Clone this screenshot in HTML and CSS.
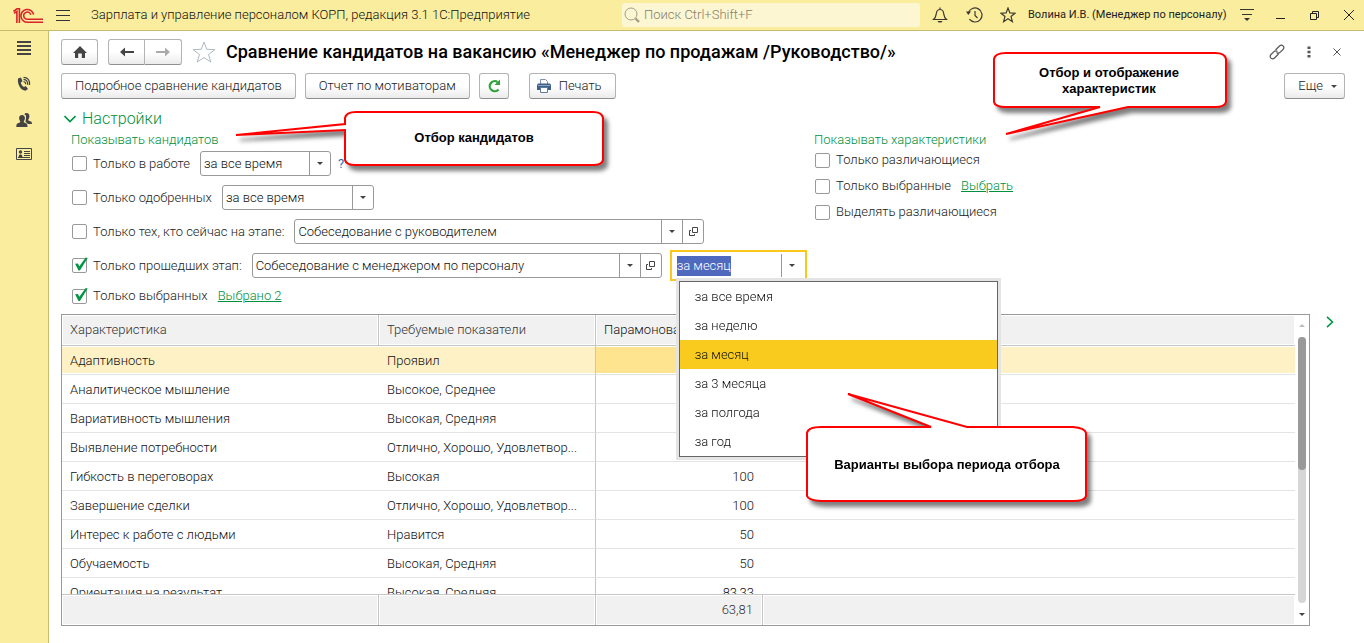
FILE: index.html
```html
<!DOCTYPE html>
<html lang="ru">
  <head>
    <meta charset="UTF-8" />
    <meta name="viewport" content="width=device-width, initial-scale=1.0" />
    <title>Сравнение кандидатов на вакансию</title>
    <link rel="stylesheet" href="styles.css">
  </head>
  <body>
    <header class="topbar">
      <svg class="logo" width="30" height="18" viewBox="0 0 30 18" fill="none" stroke="#d8232a" stroke-width="1.6">
        <path d="M0.5 5.5 L4 2.8 H6.4 V17" />
        <path d="M1 7.4 L3.9 5.4 V17" />
        <path d="M20.6 8.6 A6.4 6.4 0 1 0 15 16.2 H30" />
        <path d="M17.8 8.8 A3.6 3.6 0 1 0 15 13.2 H30" />
      </svg>
      <button class="icon-btn burger" aria-label="Меню">
        <svg width="14" height="12" viewBox="0 0 14 12" stroke="#333"><path d="M0 1.5H14M0 6.5H14M0 11.5H14" /></svg>
      </button>
      <span class="app-name">Зарплата и управление персоналом КОРП, редакция 3.1 1С:Предприятие</span>
      <label class="search">
        <svg width="16" height="16" viewBox="0 0 16 16" fill="none" stroke="#a39e86"><circle cx="7" cy="7" r="6" /><path d="M11.5 11.5L15 15" stroke-width="2.4" /></svg>
        <input type="search" placeholder="Поиск Ctrl+Shift+F" aria-label="Поиск" />
      </label>
      <button class="icon-btn bell" aria-label="Уведомления">
        <svg width="16" height="16" viewBox="0 0 16 16" fill="none" stroke="#3c3a30" stroke-width="1.2"><path d="M8 0.5V2.5M1.5 12.5C4 10.5 4 8.500 4.300 6.500C4.600 4 6 2.500 8 2.500S11.400 4 11.700 6.500C12 8.500 12 10.500 14.500 12.500Z" /><path d="M5.500 14H10.500L9.500 15.500H6.500Z" fill="#3c3a30" stroke="none" /></svg>
      </button>
      <button class="icon-btn history" aria-label="История">
        <svg width="17" height="16" viewBox="0 0 17 16" fill="none" stroke="#3c3a30" stroke-width="1.2"><path d="M2.300 6A7 7 0 1 1 3.400 12.200" /><path d="M9 4V8.500L11.500 11" /><path d="M0 4.500H5L2.300 8Z" fill="#3c3a30" stroke="none" /></svg>
      </button>
      <button class="icon-btn favorites" aria-label="Избранное">
        <svg width="16" height="16" viewBox="0 0 16 16" fill="none" stroke="#3c3a30" stroke-width="1.2"><path d="M8 1L9.900 5.900L15 6.200L11 9.500L12.400 14.700L8 11.800L3.600 14.700L5 9.500L1 6.200L6.100 5.900Z" /></svg>
      </button>
      <span class="user">Волина И.В. (Менеджер по персоналу)</span>
      <button class="icon-btn service" aria-label="Сервис">
        <svg width="14" height="14" viewBox="0 0 14 14" stroke="#333"><path d="M0 1.500H14M2 6.500H12" /><path d="M4 10H10L7 13Z" fill="#333" stroke="none" /></svg>
      </button>
      <div class="window-btns">
        <button class="icon-btn" aria-label="Свернуть"><svg width="10" height="10" viewBox="0 0 10 10" stroke="#222"><path d="M0 8.500H9" /></svg></button>
        <button class="icon-btn" aria-label="Развернуть"><svg width="10" height="10" viewBox="0 0 10 10" fill="none" stroke="#222"><path d="M0.500 3.500H6.500V9.500H0.500ZM2.500 3V1.500H8.500V7.500H7" /></svg></button>
        <button class="icon-btn" aria-label="Закрыть"><svg width="10" height="10" viewBox="0 0 10 10" stroke="#222"><path d="M0 0L10 10M10 0L0 10" /></svg></button>
      </div>
    </header>

    <div class="workspace">
      <nav class="sidebar">
        <button class="icon-btn" aria-label="Разделы">
          <svg width="16" height="16" viewBox="0 0 16 16" stroke="#444" stroke-width="2"><path d="M1 2H15M1 6H15M1 10H15M1 14H15" /></svg>
        </button>
        <button class="icon-btn" aria-label="Звонки">
          <svg width="16" height="16" viewBox="0 0 16 16" fill="none" stroke="#444"><path d="M2 2.500L5 1.500L6.500 5.200L4.800 6.500C5.300 8.500 6.300 10 8 11L9.800 10L12 13L9.500 14.800C4.500 14 1.200 8.500 2 2.500Z" fill="#444" stroke="none" /><path d="M7.500 5.500C9 5.800 9.700 6.800 9.700 8.300M7.500 3.300C10.200 3.500 11.800 5.500 11.700 8.700M7.500 1.300C11.800 1.300 14 4.500 13.500 9" stroke-width="1.200" /></svg>
        </button>
        <button class="icon-btn" aria-label="Сотрудники">
          <svg width="16" height="16" viewBox="0 0 16 16" fill="#444"><path d="M10.500 1C12.500 1 13.500 2.300 13.400 4.200C13.300 5.800 12.800 6.800 12.300 7.400V8.500L15 9.600C15.700 10 16 10.800 16 12H12L9.500 9.800L10 6V3.500L8.300 2.200C8.800 1.400 9.500 1 10.500 1Z" /><path d="M6 3C8 3 9 4.300 8.900 6.200C8.800 7.600 8.300 8.600 7.800 9.200V10.300L10.500 11.500C11.200 12 11.500 13 11.500 15H0.300C0.300 13 0.600 12 1.300 11.500L4.200 10.300V9.200C3.600 8.600 3.200 7.600 3.100 6.200C3 4.300 4 3 6 3Z" /></svg>
        </button>
        <button class="icon-btn" aria-label="Анкеты">
          <svg width="16" height="12" viewBox="0 0 16 12" fill="none" stroke="#444"><path d="M0.500 0.500H15.500V11.500H0.500Z" /><path d="M2.500 9.500C2.500 7 3.500 6.500 4.500 6.500S6.500 7 6.500 9.500Z" fill="#444" stroke="none" /><circle cx="4.500" cy="4" r="1.700" fill="#444" stroke="none" /><path d="M8 3.500H14M8 5.500H14M8 7.500H14M2 9.500H14" /></svg>
        </button>
      </nav>

      <main class="page">
        <div class="title-row">
          <button class="btn btn-nav" aria-label="Начальная страница">
            <svg width="16" height="14" viewBox="0 0 16 14" fill="#444"><path d="M8 1L15 8H13V13H9.800V8.500H6.200V13H3V8H1Z" /></svg>
          </button>
          <div class="nav-pair">
            <button class="btn" aria-label="Назад"><svg width="16" height="12" viewBox="0 0 16 12"><path d="M1 6L6 1.500V5H15V7H6V10.500Z" fill="#444" /></svg></button>
            <button class="btn" aria-label="Вперед"><svg width="16" height="12" viewBox="0 0 16 12"><path d="M15 6L10 1.500V5H1V7H10V10.500Z" fill="#aaa" /></svg></button>
          </div>
          <button class="icon-btn star" aria-label="В избранное">
            <svg width="24" height="22" viewBox="0 0 24 22" fill="none" stroke="#b0bac4"><path d="M12 1L14.700 8.300L23 8.600L16.500 13.500L18.800 21L12 16.600L5.200 21L7.500 13.500L1 8.600L9.300 8.300Z" /></svg>
          </button>
          <h1>Сравнение кандидатов на вакансию «Менеджер по продажам /Руководство/»</h1>
          <div class="form-tools">
            <button class="icon-btn" aria-label="Ссылка"><svg width="16" height="16" viewBox="0 0 16 16" fill="none" stroke="#555" stroke-width="1.200"><path d="M6.500 6L10.500 2C13 -0.300 16.300 3 14 5.500L11.300 8.200C10 9.500 8.500 9.300 7.500 8.500M9.500 10L5.500 14C3 16.300 -0.300 13 2 10.500L4.700 7.800C6 6.500 7.500 6.700 8.500 7.500" /></svg></button>
            <button class="icon-btn" aria-label="Действия"><svg width="4" height="12" viewBox="0 0 4 12" fill="#555"><path d="M0.500 0.500H3.500V3H0.500ZM0.500 4.800H3.500V7.300H0.500ZM0.500 9H3.500V11.500H0.500Z" /></svg></button>
            <button class="icon-btn" aria-label="Закрыть форму"><svg width="8" height="8" viewBox="0 0 8 8" stroke="#555"><path d="M0.500 0.500L7.500 7.500M7.500 0.500L0.500 7.500" /></svg></button>
          </div>
        </div>

        <div class="commands">
          <button class="btn">Подробное сравнение кандидатов</button>
          <button class="btn">Отчет по мотиваторам</button>
          <button class="btn btn-refresh" aria-label="Обновить">
            <svg width="14" height="14" viewBox="0 0 14 14"><path d="M11.500 10.500A5 5 0 1 1 10.500 3" fill="none" stroke="#2fa33a" stroke-width="2.200" /><path d="M13 0.500V6H7.500Z" fill="#2fa33a" /></svg>
          </button>
          <button class="btn btn-print">
            <svg width="14" height="14" viewBox="0 0 14 14"><path d="M3.500 5V0.500H8.500L10.500 2.500V5" fill="#fff" stroke="#7c93ad" /><path d="M1 4.500H13L14 6V11H0V6Z" fill="#3f6187" /><path d="M3.500 8.500H10.500V13.500H3.500Z" fill="#fff" stroke="#5f7c9c" /><path d="M1 6.500H13" stroke="#8fa8c2" /></svg>
            Печать
          </button>
          <button class="btn btn-more">Еще <i class="caret"></i></button>
        </div>

        <section class="settings">
          <h2>
            <svg width="12" height="8" viewBox="0 0 12 8" fill="none" stroke="#009646" stroke-width="1.600"><path d="M0.500 1L6 6.500L11.500 1" /></svg>
            Настройки
          </h2>
          <div class="settings-cols">
            <div class="filters">
              <h3>Показывать кандидатов</h3>
              <div class="row">
                <label class="check"><input type="checkbox" /> Только в работе</label>
                <span class="combo combo-small">
                  <select aria-label="Период в работе"><option>за все время</option></select>
                  <span class="drop"><i class="caret"></i></span>
                </span>
                <a class="help" href="#">?</a>
              </div>
              <div class="row">
                <label class="check"><input type="checkbox" /> Только одобренных</label>
                <span class="combo combo-medium">
                  <select aria-label="Период одобрения"><option>за все время</option></select>
                  <span class="drop"><i class="caret"></i></span>
                </span>
              </div>
              <div class="row">
                <label class="check"><input type="checkbox" /> Только тех, кто сейчас на этапе:</label>
                <span class="combo combo-large">
                  <select aria-label="Текущий этап"><option>Собеседование с руководителем</option></select>
                  <span class="drop"><i class="caret"></i></span>
                  <button class="open" aria-label="Открыть"><svg width="9" height="9" viewBox="0 0 9 9" fill="none" stroke="#444"><path d="M3.500 0.500H8.500V5.500H3.500ZM2 3.500H0.500V8.500H5.500V7" /></svg></button>
                </span>
              </div>
              <div class="row">
                <label class="check"><input type="checkbox" checked /> Только прошедших этап:</label>
                <span class="combo combo-large">
                  <select aria-label="Пройденный этап"><option>Собеседование с менеджером по персоналу</option></select>
                  <span class="drop"><i class="caret"></i></span>
                  <button class="open" aria-label="Открыть"><svg width="9" height="9" viewBox="0 0 9 9" fill="none" stroke="#444"><path d="M3.500 0.500H8.500V5.500H3.500ZM2 3.500H0.500V8.500H5.500V7" /></svg></button>
                </span>
                <div class="period">
                  <div class="combo combo-active">
                    <input id="period" type="text" value="за месяц" aria-label="Период" />
                    <span class="drop"><i class="caret"></i></span>
                  </div>
                  <ul class="options" role="listbox">
                    <li role="option">за все время</li>
                    <li role="option">за неделю</li>
                    <li role="option" class="current" aria-selected="true">за месяц</li>
                    <li role="option">за 3 месяца</li>
                    <li role="option">за полгода</li>
                    <li role="option">за год</li>
                  </ul>
                </div>
              </div>
              <div class="row row-last">
                <label class="check"><input type="checkbox" checked /> Только выбранных</label>
                <a href="#">Выбрано 2</a>
              </div>
            </div>

            <div class="features">
              <h3>Показывать характеристики</h3>
              <div class="row"><label class="check"><input type="checkbox" /> Только различающиеся</label></div>
              <div class="row"><label class="check"><input type="checkbox" /> Только выбранные</label> <a href="#">Выбрать</a></div>
              <div class="row"><label class="check"><input type="checkbox" /> Выделять различающиеся</label></div>
            </div>
          </div>
        </section>

        <div class="result">
          <div class="grid">
            <div class="grid-view">
              <table>
                <colgroup>
                  <col class="col-name" /><col class="col-need" /><col class="col-person" /><col />
                </colgroup>
                <thead>
                  <tr><th>Характеристика</th><th>Требуемые показатели</th><th class="person">Парамонова</th><th></th></tr>
                </thead>
                <tbody>
                  <tr class="selected"><td>Адаптивность</td><td>Проявил</td><td class="num active"></td><td></td></tr>
                  <tr><td>Аналитическое мышление</td><td>Высокое, Среднее</td><td class="num"></td><td></td></tr>
                  <tr><td>Вариативность мышления</td><td>Высокая, Средняя</td><td class="num"></td><td></td></tr>
                  <tr><td>Выявление потребности</td><td>Отлично, Хорошо, Удовлетвор...</td><td class="num"></td><td></td></tr>
                  <tr><td>Гибкость в переговорах</td><td>Высокая</td><td class="num">100</td><td></td></tr>
                  <tr><td>Завершение сделки</td><td>Отлично, Хорошо, Удовлетвор...</td><td class="num">100</td><td></td></tr>
                  <tr><td>Интерес к работе с людьми</td><td>Нравится</td><td class="num">50</td><td></td></tr>
                  <tr><td>Обучаемость</td><td>Высокая, Средняя</td><td class="num">50</td><td></td></tr>
                  <tr><td>Ориентация на результат</td><td>Высокая, Средняя</td><td class="num">83,33</td><td></td></tr>
                </tbody>
                <tfoot>
                  <tr><td></td><td></td><td class="num">63,81</td><td></td></tr>
                </tfoot>
              </table>
            </div>
            <div class="scroller">
              <i class="caret caret-up"></i>
              <div class="track"><div class="thumb"></div></div>
              <i class="caret"></i>
            </div>
          </div>
          <button class="icon-btn expand" aria-label="Показать панель">
            <svg width="8" height="12" viewBox="0 0 8 12" fill="none" stroke="#009646" stroke-width="1.600"><path d="M1 0.800L6.500 6L1 11.200" /></svg>
          </button>
        </div>
      </main>
    </div>

    <!-- callouts -->
    <div class="callout callout-candidates">
      <svg width="376" height="70" viewBox="0 0 376 70"><path d="M113 10Q114 4 124 4H361Q370 4 371 10V52Q370 57 361 57H124Q114 57 113 52V22L4 27L113 16Z" /></svg>
      <p>Отбор кандидатов</p>
    </div>
    <div class="callout callout-features">
      <svg width="246" height="96" viewBox="0 0 246 96"><path d="M4 10Q5 4 16 4H225Q235 4 236 10V53Q235 58 225 58H138L16 85L110 58H16Q5 58 4 53Z" /></svg>
      <p>Отбор и отображение характеристик</p>
    </div>
    <div class="callout callout-period">
      <svg width="292" height="120" viewBox="0 0 292 120"><path d="M4 43Q5 37 18 37H128L45 4L164 37H270Q282 38 283 43V106Q282 111 270 111H18Q5 110 4 106Z" /></svg>
      <p>Варианты выбора периода отбора</p>
    </div>

    <script>
      document.getElementById("period").select();
    </script>
  </body>
</html>
```
FILE: styles.css
```css
* {
  box-sizing: border-box;
}

body {
  margin: 0;
  height: 100vh;
  min-height: 600px;
  position: relative;
  display: flex;
  flex-direction: column;
  font-family: Roboto, "Liberation Sans", sans-serif;
  font-size: 13px;
  font-weight: 300;
  line-height: 20px;
  color: #111;
  background-color: #fff;
}

button,
input,
select {
  font: inherit;
  color: inherit;
}

svg {
  display: block;
  flex: none;
}

a,
h2,
h3 {
  color: #009040;
}

.icon-btn {
  display: flex;
  align-items: center;
  justify-content: center;
  padding: 0;
  border: none;
  background: none;
  cursor: pointer;
}

/* Top bar */
.topbar {
  display: flex;
  align-items: center;
  height: 31px;
  padding: 0 10px 0 13px;
  background-color: #fbed9e;
  border-bottom: 1px solid #c9bb6d;
}

.burger {
  margin-left: 13px;
}

.app-name {
  margin-left: 21px;
  flex: 1;
  white-space: nowrap;
}

.search {
  display: flex;
  align-items: center;
  gap: 4px;
  width: 298px;
  height: 24px;
  padding: 0 2px;
  border-radius: 3px;
  background-color: #fdf6d3;
}

.search input {
  flex: 1;
  min-width: 0;
  padding: 0;
  border: none;
  outline: none;
  background: none;
}

.search input::placeholder {
  color: #858068;
}

.bell {
  margin-left: 12px;
}

.history {
  margin-left: 18px;
}

.favorites {
  margin-left: 17px;
}

.user {
  margin-left: 12px;
  width: 198px;
  font-size: 11px;
  font-weight: 400;
  color: #222;
  white-space: nowrap;
}

.service {
  margin-left: 14px;
}

.window-btns {
  display: flex;
  gap: 24px;
  margin-left: 22px;
}

/* Left panel */
.workspace {
  flex: 1;
  min-height: 0;
  display: flex;
}

.sidebar {
  flex: none;
  width: 49px;
  padding-top: 9px;
  display: flex;
  flex-direction: column;
  align-items: center;
  gap: 20px;
  background-color: #fbed9e;
  border-right: 1px solid #c9bb6d;
}

.page {
  flex: 1;
  min-width: 0;
  display: flex;
  flex-direction: column;
  padding: 8px 19px 17px 12px;
}

/* Buttons */
.btn {
  display: flex;
  align-items: center;
  justify-content: center;
  gap: 8px;
  height: 26px;
  padding: 0 13px;
  border: 1px solid #b3b3b3;
  border-bottom-color: #8f8f8f;
  border-radius: 3px;
  background: linear-gradient(#fff 50%, #ebebeb);
  color: #222;
  white-space: nowrap;
  cursor: pointer;
}

.title-row {
  display: flex;
  align-items: center;
  height: 25px;
}

.btn-nav {
  width: 37px;
  padding: 0;
}

.nav-pair {
  display: flex;
  margin-left: 10px;
}

.nav-pair .btn {
  width: 37px;
  padding: 0;
}

.nav-pair .btn:first-child {
  border-radius: 3px 0 0 3px;
}

.nav-pair .btn:last-child {
  border-left: none;
  border-radius: 0 3px 3px 0;
}

.star {
  margin-left: 10px;
}

h1 {
  flex: 1;
  margin: 0 0 0 10px;
  font-size: 18px;
  font-weight: 500;
  color: #000;
  white-space: nowrap;
}

.form-tools {
  display: flex;
  align-items: center;
  gap: 22px;
  margin-right: 4px;
}

.commands {
  display: flex;
  gap: 9px;
  margin-top: 9px;
}

.btn-refresh {
  width: 30px;
  padding: 0;
}

.btn-print {
  margin-left: 11px;
  padding: 0 13px 0 7px;
}

.btn-more {
  margin-left: auto;
  padding: 0 7px 0 13px;
}

.caret {
  display: inline-block;
  border: 3px solid transparent;
  border-top-color: #444;
  border-bottom: none;
}

.caret-up {
  border-top: none;
  border-bottom: 3px solid #bbb;
}

/* Settings */
.settings h2 {
  display: flex;
  align-items: center;
  gap: 6px;
  margin: 9px 0 0 3px;
  font-size: 16px;
  font-weight: 300;
  line-height: 22px;
}

.settings h3 {
  margin: 0;
  font-size: 13px;
  font-weight: 300;
}

.settings-cols {
  display: grid;
  grid-template-columns: 7fr 5fr;
}

.filters {
  padding-left: 10px;
}

.features {
  padding-left: 4px;
}

.row {
  display: flex;
  align-items: center;
  gap: 10px;
  height: 25px;
  margin-bottom: 9px;
}

.filters h3 {
  margin-bottom: 1px;
}

.row-last {
  height: 18px;
}

.features .row {
  height: 20px;
  margin-bottom: 6px;
}

.check {
  display: flex;
  align-items: center;
  gap: 6px;
  margin-left: 1px;
  color: #222;
  white-space: nowrap;
}

.check input {
  position: relative;
  appearance: none;
  width: 15px;
  height: 15px;
  margin: 0;
  border: 1px solid #999;
  border-radius: 2px;
  background-color: #fff;
}

.check input:checked::after {
  content: "";
  position: absolute;
  left: 1px;
  top: -2px;
  width: 14px;
  height: 14px;
  background-color: #009646;
  clip-path: polygon(8% 48%, 28% 46%, 38% 66%, 84% 4%, 98% 8%, 42% 96%, 32% 96%);
}

.combo {
  display: flex;
  height: 25px;
  border: 1px solid #999;
  border-radius: 3px;
  background-color: #fff;
}

.combo select,
.combo input {
  flex: 1;
  min-width: 0;
  appearance: none;
  padding: 0 3px;
  border: none;
  outline: none;
  background: none;
}

.combo-small {
  width: 131px;
}

.combo-medium {
  width: 152px;
}

.combo-large {
  width: 410px;
}

.drop,
.open {
  display: flex;
  align-items: center;
  justify-content: center;
  width: 21px;
  padding: 0;
  border: none;
  border-left: 1px solid #999;
  background: none;
}

.help {
  margin-left: -3px;
  font-weight: 400;
  color: #1a75bb;
  text-decoration: none;
}

.period {
  position: relative;
  margin-left: -2px;
}

.combo-active {
  width: 137px;
  height: 31px;
  padding: 2px;
  border: 2px solid #f8c81c;
  border-radius: 0;
}

.combo-active .drop {
  width: 22px;
}

.combo-active input::selection {
  background-color: #4f69bf;
  color: #fff;
}

.options {
  position: absolute;
  z-index: 2;
  top: 31px;
  left: 9px;
  width: 319px;
  margin: 0;
  padding: 0;
  list-style: none;
  border: 1px solid #666;
  background-color: #fff;
  box-shadow: 0 0 0 3px #e4e4e4;
}

.options li {
  padding: 0 15px;
  line-height: 29px;
}

.options .current {
  background-color: #facb1f;
}

/* Result table */
.result {
  flex: 1;
  min-height: 0;
  display: flex;
  align-items: flex-start;
}

.grid {
  flex: 1;
  min-width: 0;
  height: 100%;
  display: flex;
  border: 1px solid #999;
}

.grid-view {
  flex: 1;
  min-width: 0;
  overflow: hidden;
}

table {
  width: 100%;
  table-layout: fixed;
  border-collapse: separate;
  border-spacing: 0;
}

.col-name {
  width: 317px;
}

.col-need {
  width: 217px;
}

.col-person {
  width: 167px;
}

th,
td {
  height: 29px;
  padding: 2px 8px 0;
  overflow: hidden;
  text-align: left;
  white-space: nowrap;
  font-weight: 300;
  border-bottom: 1px solid #e4e4e4;
}

td:nth-child(2) {
  border-right: 1px solid #c6c6c6;
}

th,
tfoot td {
  height: 31px;
  padding-top: 0;
  background-color: #f1f1f1;
  border-right: 1px solid #c6c6c6;
  box-shadow: inset 0 0 0 1px #fff;
}

th {
  color: #333;
  border-bottom-color: #c6c6c6;
}

th.person {
  color: #111;
}

th:last-child,
tfoot td:last-child {
  border-right: none;
}

tfoot td {
  position: sticky;
  bottom: 0;
  color: #333;
  border-top: 1px solid #c6c6c6;
  border-bottom: none;
}

.num {
  padding-right: 9px;
  text-align: right;
}

.selected td {
  background-color: #fef1c5;
  box-shadow: inset 0 1px #fff, inset 0 -1px #fff;
}

.selected .active {
  background-color: #ffe48f;
}

.scroller {
  width: 14px;
  display: flex;
  flex-direction: column;
  align-items: center;
  gap: 10px;
  padding: 9px 0;
}

.track {
  flex: 1;
  width: 8px;
  border-radius: 4px;
  background-color: #d6d6d6;
}

.thumb {
  height: 50%;
  border-radius: 4px;
  background-color: #999;
}

.expand {
  width: 35px;
  height: 16px;
  padding-left: 4px;
}

/* Callouts */
.callout {
  position: absolute;
  z-index: 3;
  pointer-events: none;
}

.callout svg {
  overflow: visible;
  filter: drop-shadow(4px 5px 2px rgba(0, 0, 0, 0.5));
}

.callout path {
  fill: #fff;
  stroke: #f00;
  stroke-width: 2;
}

.callout p {
  position: absolute;
  margin: 0;
  font-family: "Liberation Sans", Arial, sans-serif;
  font-size: 13px;
  font-weight: bold;
  line-height: 16px;
  text-align: center;
  color: #000;
}

.callout-candidates {
  left: 232px;
  top: 108px;
}

.callout-candidates p {
  left: 112px;
  right: 4px;
  top: 22px;
}

.callout-features {
  left: 990px;
  top: 49px;
}

.callout-features p {
  left: 28px;
  right: 36px;
  top: 16px;
}

.callout-period {
  left: 803px;
  top: 390px;
}

.callout-period p {
  left: 4px;
  right: 8px;
  top: 67px;
}
```
